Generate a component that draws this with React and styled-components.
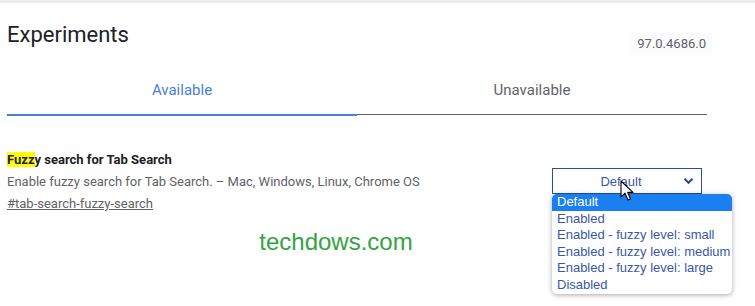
import React from 'react';
import styled, { createGlobalStyle } from 'styled-components';

const GlobalStyle = createGlobalStyle`
  html, body {
    margin: 0;
    padding: 0;
    background: #fff;
    font-family: Roboto, "Liberation Sans", Arial, sans-serif;
  }
`;

const Page = styled.div`
  width: 755px;
  height: 306px;
  overflow: hidden;
  border-top: 3px solid #ececec;
  box-sizing: border-box;
  position: relative;
`;

const Content = styled.div`
  width: 700px;
  margin-left: 7px;
`;

const Header = styled.div`
  display: flex;
  justify-content: space-between;
  align-items: flex-start;
  padding-top: 18px;
  height: 46px;
`;

const Title = styled.h1`
  margin: 0;
  font-size: 22px;
  font-weight: 400;
  color: #202124;
  line-height: 28px;
`;

const Version = styled.div`
  margin-top: 12px;
  margin-right: -5px;
  padding: 3px 6px;
  font-size: 13px;
  color: #5f6368;
  background: #fbfbfb;
`;

const Tabs = styled.div`
  display: flex;
  margin-top: 14px;
`;

const Tab = styled.div`
  flex: 1;
  text-align: center;
  font-size: 15px;
  line-height: 18px;
  padding-bottom: 15px;
  color: ${p => (p.$active ? '#4a7fd9' : '#5f6368')};
  border-bottom: ${p => (p.$active ? '2px solid #4a7fd9' : '1px solid #5f6368')};
  margin-bottom: ${p => (p.$active ? '0' : '1px')};
`;

const Feature = styled.div`
  display: flex;
  justify-content: space-between;
  margin-top: 36px;
`;

const Info = styled.div`
  display: flex;
  flex-direction: column;
  gap: 6px;
`;

const FeatureName = styled.div`
  font-size: 13px;
  font-weight: 700;
  color: #202124;
  line-height: 16px;
`;

const Mark = styled.span`
  background: #ffff00;
`;

const Desc = styled.div`
  font-size: 13px;
  color: #5f6368;
  line-height: 16px;
`;

const Link = styled.a`
  font-size: 13px;
  color: #5f6368;
  line-height: 16px;
  text-decoration: underline;
`;

const SelectWrap = styled.div`
  position: relative;
  width: 150px;
  margin-top: 16px;
  margin-right: 5px;
  font-family: "Liberation Sans", Arial, sans-serif;
`;

const SelectBox = styled.div`
  box-sizing: border-box;
  height: 26px;
  padding-right: 12px;
  border: 1px solid #2b4f90;
  display: flex;
  align-items: center;
  justify-content: center;
  font-size: 13px;
  color: #3b5aa8;
  position: relative;
`;

const Chevron = styled.svg`
  position: absolute;
  right: 7px;
  top: 8px;
`;

const Menu = styled.ul`
  position: absolute;
  top: 26px;
  left: 0;
  width: 180px;
  margin: 0;
  padding: 0;
  list-style: none;
  background: #fff;
  border-radius: 5px;
  box-shadow: 0 1px 5px rgba(0, 0, 0, 0.35);
  overflow: hidden;
  z-index: 2;
`;

const Option = styled.li`
  font-size: 13px;
  line-height: 16.6px;
  padding: 0 5px;
  white-space: nowrap;
  color: ${p => (p.$selected ? '#fff' : '#3b57a8')};
  background: ${p => (p.$selected ? '#1a7ff0' : 'transparent')};
`;

const Cursor = styled.svg`
  position: absolute;
  left: 68px;
  top: 12px;
  z-index: 3;
`;

const Watermark = styled.div`
  text-align: center;
  margin-top: 16px;
  margin-right: 42px;
  font-family: "Liberation Sans", Arial, sans-serif;
  font-size: 24px;
  color: #33a33f;
`;

const options = [
  'Default',
  'Enabled',
  'Enabled - fuzzy level: small',
  'Enabled - fuzzy level: medium',
  'Enabled - fuzzy level: large',
  'Disabled',
];

export default function App() {
  return (
    <>
      <GlobalStyle />
      <Page>
        <Content>
          <Header>
            <Title>Experiments</Title>
            <Version>97.0.4686.0</Version>
          </Header>
          <Tabs>
            <Tab $active>Available</Tab>
            <Tab>Unavailable</Tab>
          </Tabs>
          <Feature>
            <Info>
              <FeatureName>
                <Mark>Fuzz</Mark>y search for Tab Search
              </FeatureName>
              <Desc>Enable fuzzy search for Tab Search. – Mac, Windows, Linux, Chrome OS</Desc>
              <Link href="#tab-search-fuzzy-search">#tab-search-fuzzy-search</Link>
            </Info>
            <SelectWrap>
              <SelectBox>
                Default
                <Chevron width="11" height="8" viewBox="0 0 11 8">
                  <path d="M1.5 1.8 L5.5 5.8 L9.5 1.8" fill="none" stroke="#2b4f90" strokeWidth="2.2" />
                </Chevron>
              </SelectBox>
              <Cursor width="14" height="22" viewBox="0 0 14 22">
                <path d="M1 1 L1 17 L5 13.2 L8 20 L10.5 19 L7.6 12.4 L13 12.4 Z" fill="#fff" stroke="#000" strokeWidth="1.1" strokeLinejoin="round" />
              </Cursor>
              <Menu>
                {options.map((o, i) => (
                  <Option key={o} $selected={i === 0}>{o}</Option>
                ))}
              </Menu>
            </SelectWrap>
          </Feature>
          <Watermark>techdows.com</Watermark>
        </Content>
      </Page>
    </>
  );
}
